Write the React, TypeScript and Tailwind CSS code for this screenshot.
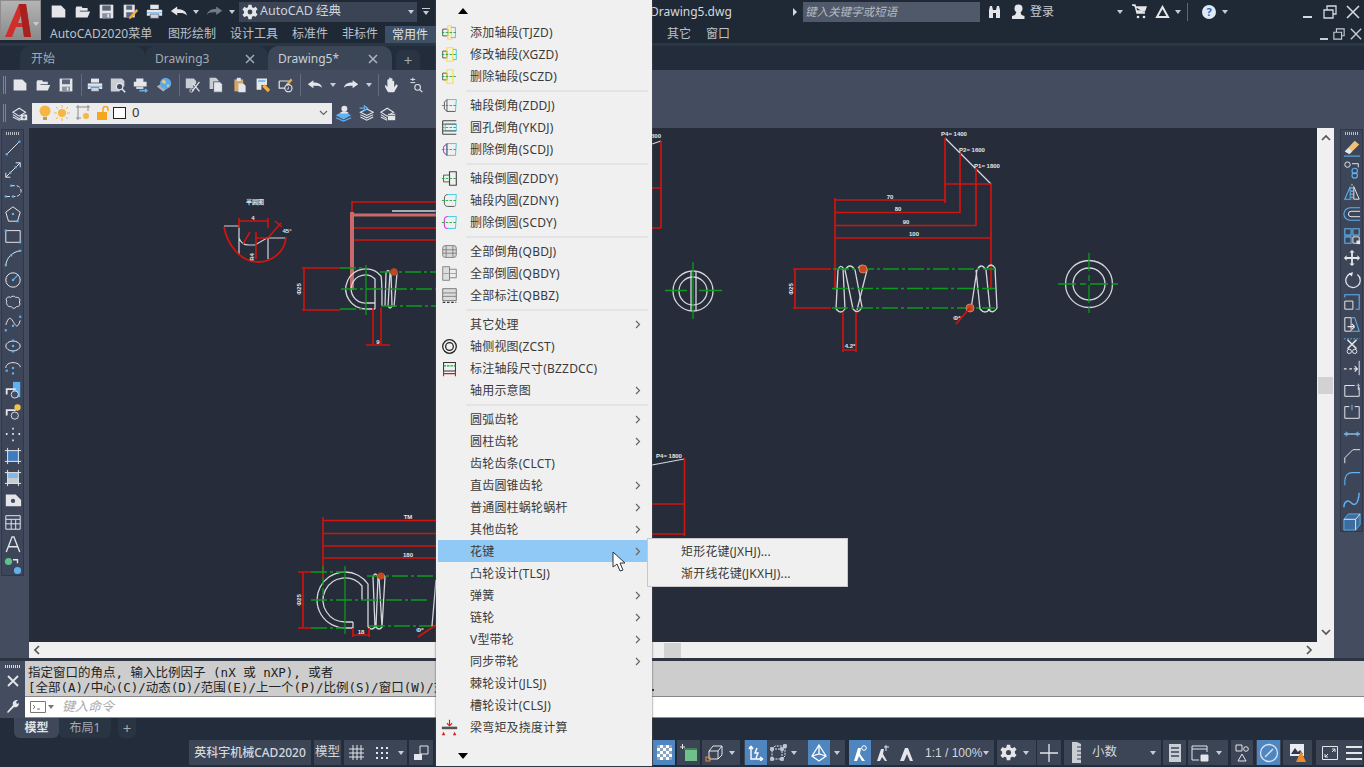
import { ReactNode } from "react";

const sans = "font-['Noto_Sans','Noto_Sans_CJK_SC',sans-serif]";
const RED = "#d0150f";
const GREEN = "#0c9a1c";
const WIRE = "#d4d6da";

type IconProps = { size?: number; className?: string; children: ReactNode };

// every toolbar glyph is drawn on a 20x20 box
function Ic({ size = 18, className = "", children }: IconProps) {
  return (
    <svg width={size} height={size} viewBox="0 0 20 20" fill="none" className={`shrink-0 ${className}`}>
      {children}
    </svg>
  );
}

const W = "#e4e6ea";
const B = "#5fb2ef";

const glyph: Record<string, ReactNode> = {
  file: <path d="M2 3h11l5 5v9H2z" fill={W} />,
  open: <path d="M2 6l1-2h6l1 2h6v3H7l-3 8H2zM6 10h13l-3 7H3z" fill={W} />,
  save: (
    <>
      <path d="M2 2h16v16H2z" fill={W} />
      <path d="M5 3h10v6H5z" fill="#5d6676" />
      <path d="M5 12h10v6H5z" fill="#8a92a0" />
      <path d="M11 13h2v4h-2z" fill={W} />
    </>
  ),
  saveas: (
    <>
      <path d="M2 2h13v15H2z" fill={W} />
      <path d="M5 3h7v5H5zM5 11h8v6H5z" fill="#5d6676" />
      <path d="M9 16l8-9 2 2-8 9-3 1z" fill="#efb040" />
    </>
  ),
  print: (
    <>
      <path d="M5 2h10v5H5z" fill={W} />
      <path d="M1 8h18v7H1z" fill={W} />
      <path d="M1 11h18v1H1z" fill="#5fb2ef" />
      <path d="M5 13h10v5H5z" fill="#cfd3da" stroke="#444d60" strokeWidth="0.7" />
    </>
  ),
  undo: <path d="M1 9l7-5v3c6 0 10 2 11 7-2-3-6-3-11-3v3z" fill={W} />,
  redo: <path d="M19 9l-7-5v3C6 7 2 9 1 14c2-3 6-3 11-3v3z" fill="#727a88" />,
  redo2: <path d="M19 9l-7-5v3C6 7 2 9 1 14c2-3 6-3 11-3v3z" fill={W} />,
  preview: (
    <>
      <path d="M1 2h14l3 3v7h-6v6H1z" fill="#c9cdd4" />
      <circle cx="12" cy="12" r="4" fill="#444d60" stroke={W} strokeWidth="1.5" />
      <path d="M15 15l4 4" stroke={W} strokeWidth="2" />
    </>
  ),
  plot: (
    <>
      <path d="M4 2h9v4H4zM1 6h16v6H1z" fill={W} />
      <path d="M4 12h9v3H4z" fill="#cfd3da" />
      <path d="M8 16h7v-2l4 3-4 3v-2H8z" fill={B} />
    </>
  ),
  globe: (
    <>
      <path d="M1 12l8-5 8 5-8 6z" fill="#aab0ba" />
      <circle cx="12" cy="8" r="7" fill="#5aa8e8" />
      <path d="M9 3c3 1 4 3 3 5-2 1-4 0-5-2zM14 9c2 0 3 1 3 2l-3 2z" fill="#e8c878" />
    </>
  ),
  cut: (
    <>
      <path d="M1 2h10l3 3v3l-4 3 1 3H1z" fill="#c9cdd4" />
      <path d="M10 8l8 10M18 6L9 18" stroke={W} strokeWidth="1.6" />
      <circle cx="8" cy="17" r="2" stroke={W} />
    </>
  ),
  copy: (
    <>
      <path d="M2 1h8l3 3v11H2z" fill="#c9cdd4" />
      <path d="M7 6h8l3 3v10H7z" fill={W} stroke="#444d60" />
    </>
  ),
  paste: (
    <>
      <path d="M3 3h11v15H3z" fill="#d3a865" />
      <path d="M6 1h5v4H6z" fill={W} />
      <path d="M8 8h6l3 3v8H8z" fill={W} />
    </>
  ),
  match: (
    <>
      <path d="M2 2h13v8H8v6H2z" fill={W} />
      <path d="M4 4h9v2H4z" fill="#5fb2ef" />
      <path d="M9 12l3-3 7 7-3 3z" fill="#efb040" />
    </>
  ),
  block: (
    <>
      <path d="M1.500 5h12M1.500 5v9h7" stroke={W} strokeWidth="1.5" />
      <path d="M10 9l6-7 2 2-6 7z" fill="#efb040" />
      <circle cx="13" cy="14" r="4.500" stroke={W} strokeWidth="1.4" />
      <path d="M13 12v3h-2" stroke={W} />
    </>
  ),
  hand: (
    <path
      d="M5 18c-2-3-4-6-4-8 1-1 2 0 3 2V4c0-2 2-2 2 0v4-6c0-2 2-2 2 0v6-5c0-2 2-2 2 0v6-3c0-2 2-2 2 0v6l2-3c2-1 2 1 2 2l-3 5-1 2z"
      fill={W}
    />
  ),
  zoomx: (
    <>
      <path d="M3 3h6M6 1v4M3 7h6" stroke={W} strokeWidth="1.2" />
      <circle cx="12" cy="13" r="3.500" stroke={W} strokeWidth="1.3" />
      <path d="M15 16l3 3" stroke={W} strokeWidth="1.5" />
    </>
  ),
  layerA: (
    <>
      <path d="M1 9l8-5 8 5-8 5zM1 12l8 5 8-5M1 15l8 4 8-4" stroke={W} strokeWidth="1.3" />
      <rect x="11" y="12" width="8" height="7" fill={W} />
      <path d="M15 13v5M13 15.500h4" stroke="#444d60" />
    </>
  ),
  layerB: (
    <>
      <path d="M1 12l9-5 9 5-9 5z" fill={B} />
      <path d="M1 15l9 4 9-4" stroke={B} strokeWidth="1.500" />
      <circle cx="11" cy="4.500" r="3.500" fill={W} />
      <path d="M6 10c0-3 10-3 10 0z" fill={W} />
    </>
  ),
  layerC: (
    <>
      <path d="M3 9l8-4 8 4-8 4zM3 12l8 4 8-4M3 15l8 4 8-4" stroke={W} strokeWidth="1.3" />
      <path d="M2 4h6V1l4 3-4 3V5" stroke={B} strokeWidth="1.500" />
    </>
  ),
  layerD: (
    <>
      <path d="M1 9l8-5 8 5-8 5zM1 12l8 5M1 15l8 4" stroke={W} strokeWidth="1.3" />
      <rect x="10" y="11" width="9" height="8" fill={W} />
      <path d="M10 13h9" stroke="#444d60" />
    </>
  ),
};

function Dots({ pts }: { pts: number[][] }) {
  return (
    <>
      {pts.map(([x, y]) => (
        <rect key={`${x}-${y}`} x={x - 1.2} y={y - 1.2} width="2.400" height="2.400" fill={B} />
      ))}
    </>
  );
}

const line = { stroke: W, strokeWidth: 1.1 };
const blueLine = { stroke: B, strokeWidth: 1.2 };

const leftTools: ReactNode[] = [
  <><path d="M3 17L17 3" {...line} /><Dots pts={[[3, 17], [17, 3]]} /></>,
  <><path d="M2 18L18 2M18 2h-5M18 2v5M2 18h5M2 18v-5" {...line} /><Dots pts={[[7, 13], [13, 7]]} /></>,
  <><path d="M8 3h5c4 0 6 3 6 6s-3 6-6 6H2" {...line} strokeDasharray="4 2" /><Dots pts={[[2, 15], [10, 15], [8, 3]]} /></>,
  <><path d="M10 2l8 6-3 10H5L2 8z" {...line} /><Dots pts={[[10, 10], [15, 18]]} /></>,
  <><path d="M2 4h16v13H2z" {...line} /><Dots pts={[[2, 4], [18, 17]]} /></>,
  <><path d="M2 18C3 9 10 3 18 2" {...line} /><Dots pts={[[2, 18], [8, 7], [18, 2]]} /></>,
  <><circle cx="10" cy="10" r="8" {...line} /><path d="M10 10l6-6" {...blueLine} /><Dots pts={[[10, 10]]} /></>,
  <path d="M3 9c-2-3 2-6 4-4 2-2 5-2 6 0 3-1 6 2 4 5 2 3-1 6-3 5-2 3-5 2-6 0-3 1-6-2-5-6z" {...line} />,
  <><path d="M2 11c3-9 5-9 8-4s5 9 8-1" {...line} /><Dots pts={[[2, 17], [18, 2], [10, 12]]} /></>,
  <><ellipse cx="10" cy="10" rx="8" ry="5.500" {...line} /><Dots pts={[[10, 4], [10, 16], [10, 10]]} /></>,
  <><path d="M2 10c0-4 4-6 8-6s8 2 8 5" {...line} /><Dots pts={[[10, 10], [10, 16], [3, 13]]} /></>,
  <><path d="M10 1h8v17h-8z" fill={B} /><path d="M2 8h11v2H4v5H2z" fill={W} /><circle cx="12" cy="15" r="4" fill="#444d60" stroke={W} /></>,
  <><path d="M2 7h11v2H4v5H2z" fill={W} /><circle cx="15" cy="5" r="3.500" fill="#f2c050" /><circle cx="12" cy="14" r="4" fill="#444d60" stroke={W} /></>,
  <path d="M10 3v2M3 9v2M17 9v2M10 9v2M10 16v2" stroke={W} strokeWidth="1.800" />,
  <><path d="M4 4h12v12H4z" fill="#3e7cc0" /><path d="M1 4h18M1 16h18M4 1v18M16 1v18" {...line} /></>,
  <><path d="M4 4h12v12H4z" fill="#80b8e8" /><path d="M4 10h12v6H4z" fill="#c8ccd2" /><path d="M1 4h18M1 16h18M4 1v18M16 1v18" {...line} /></>,
  <><path d="M2 4h11l6 6v7H2z" fill={W} /><circle cx="10" cy="11" r="2.400" fill="#444d60" /></>,
  <><path d="M2 3h16v15H2zM2 7h16M2 12h16M8 7v11M13 7v11" stroke={W} strokeWidth="1.100" /></>,
  <path d="M2.500 19L9 2h2l6.500 17M5 13h10" stroke={W} strokeWidth="1.500" />,
  <><circle cx="5" cy="5" r="4" fill="#5ec28a" /><circle cx="15" cy="15" r="4" fill={B} /><path d="M10 3h5v4" stroke={W} strokeWidth="1.500" /></>,
];

const rightTools: ReactNode[] = [
  <><path d="M2 14L13 2l5 4-10 10z" fill="#efc27a" /><path d="M2 14l4-4 4 4-3 3z" fill={W} /><path d="M1 19h18" {...blueLine} /></>,
  <><circle cx="5" cy="4" r="3" {...line} /><path d="M10 3h7v4" {...line} /><circle cx="13" cy="11" r="3" {...blueLine} /><circle cx="13" cy="16" r="3" {...blueLine} /></>,
  <><path d="M2 18L8 4v14z" {...blueLine} /><path d="M18 18L12 4v14z" {...line} /><path d="M10 1v18" stroke={W} strokeDasharray="2 1.500" /></>,
  <><path d="M19 3H8a6.500 6.500 0 000 14h11" {...blueLine} /><path d="M19 7H9a3 3 0 000 6h10" {...line} /></>,
  <><path d="M2 2h7v7H2zM11 2h7v7h-7zM2 11h7v7H2z" {...blueLine} /><path d="M11 11h7v7h-7z" {...line} /><rect x="15" y="15" width="4" height="4" fill={W} /></>,
  <path d="M10 1l3 3h-2v5h5V7l3 3-3 3v-2h-5v5h2l-3 3-3-3h2v-5H4v2l-3-3 3-3v2h5V4H7z" fill={W} />,
  <><path d="M8 3a8 8 0 108 1" stroke={W} strokeWidth="1.400" /><path d="M11 1L6 3l4 3z" fill={W} /></>,
  <><path d="M2 9h9v9H2z" {...line} /><path d="M2 5V2h16v16h-4" {...blueLine} /></>,
  <><path d="M2 3h7v15H2z" {...line} /><path d="M9 3h4l5 15H9" {...blueLine} /><path d="M5 13h8M13 13l-3-3M13 13l-3 3" stroke={W} strokeWidth="1.300" /></>,
  <><path d="M1 2h18" stroke={B} strokeDasharray="2 1.500" /><path d="M5 3l10 10M15 3L5 13" stroke={W} strokeWidth="1.800" /><circle cx="7" cy="16" r="2.400" {...line} /><circle cx="13" cy="16" r="2.400" {...line} /></>,
  <><path d="M18 2v16" {...line} /><path d="M1 11h3M7 11h3M12 11h4M13 8l3 3-3 3" stroke={W} strokeWidth="1.300" /></>,
  <><path d="M13 5H2v12h16V7M17 3v7" {...line} /><path d="M15 5h4" {...blueLine} /></>,
  <><path d="M7 4H2v13h16V4h-5" {...line} /><path d="M10 2v6" {...blueLine} /></>,
  <><path d="M1 10h18" {...line} /><path d="M3 7l4 3-4 3zM17 7l-4 3 4 3z" fill={B} /></>,
  <path d="M2 18v-6L11 3h8" {...line} />,
  <path d="M2 18v-5c0-6 4-9 8-9h9" {...blueLine} />,
  <path d="M1 18c0-6 4-9 8-5s8 2 9-11" {...blueLine} strokeWidth={1.6} />,
  <><path d="M6 1h13v12l-5 6H1V7z" fill="#3d6d9f" stroke={B} /><path d="M1 7h13v12M14 7l5-6" {...line} /></>,
];

function Caret({ className = "" }: { className?: string }) {
  return <span className={`block h-0 w-0 shrink-0 border-x-[3px] border-t-[4px] border-x-transparent border-t-[#c8ccd2] ${className}`} />;
}

function Grip({ vertical }: { vertical?: boolean }) {
  return vertical ? (
    <div className="h-[18px] w-[3px] border-x border-[#7d8594]" />
  ) : (
    <div className="h-[3px] w-[14px] bg-[repeating-linear-gradient(90deg,#b7bcc5_0,#b7bcc5_1px,transparent_1px,transparent_2px)]" />
  );
}

function Sep() {
  return <div className="h-[22px] w-px bg-[#636c7c]" />;
}

function TitleBar() {
  return (
    <div className={`flex h-[23px] items-center whitespace-nowrap text-[#d5d8dd] [&>*]:shrink-0 ${sans}`}>
      <div className="ml-[9px] flex w-[185px] items-center justify-between">
        <Ic size={17}>{glyph.file}</Ic>
        <Ic size={17}>{glyph.open}</Ic>
        <Ic size={17}>{glyph.save}</Ic>
        <Ic size={17}>{glyph.saveas}</Ic>
        <Ic size={17}>{glyph.print}</Ic>
        <div className="flex items-center gap-[5px]">
          <Ic size={18}>{glyph.undo}</Ic>
          <Caret />
        </div>
        <div className="flex items-center gap-[6px]">
          <Ic size={17}>{glyph.redo}</Ic>
          <Caret className="border-t-[#7d8594]" />
        </div>
      </div>
      <div className="ml-[4px] flex h-[20px] w-[178px] items-center bg-[#3a4454] pl-[3px] pr-[3px] text-[12.500px]">
        <svg width="16" height="16" viewBox="0 0 20 20" className="shrink-0">
          <path
            d="M8 1h4l.5 3 2 1 2.500-1.500 2.500 3-2 2v2.500l2 2-2.500 3L14.500 15l-2 1-.5 3H8l-.5-3-2-1L3 16.500.5 13.500l2-2V9l-2-2L3 3.500 5.500 5l2-1z"
            fill="#e4e6ea"
          />
          <circle cx="10" cy="10" r="3" fill="#3a4454" />
        </svg>
        <span className="ml-[2px] text-[#cfd3d9]">AutoCAD 经典</span>
        <Caret className="ml-auto" />
      </div>
      <div className="ml-[4px] flex w-[10px] flex-col items-center gap-[2px]">
        <div className="h-px w-[8px] bg-[#c8ccd2]" />
        <Caret />
      </div>
      <div className="ml-[219px] w-[82px] text-[12px] text-[#d5d8dd]">Drawing5.dwg</div>
      <div className="ml-[61px] h-0 w-0 border-y-[4px] border-l-[4px] border-y-transparent border-l-[#d5d8dd]" />
      <div className="ml-[6px] flex h-[20px] w-[177px] items-center bg-[#4f5969] pl-[2px] text-[11.500px] italic text-[#b4b9c1]">
        键入关键字或短语
      </div>
      <svg width="13" height="14" viewBox="0 0 13 14" className="ml-[8px]">
        <path d="M1 5l1-4h2l1 4v8H1zM8 5l1-4h2l1 4v8H8zM5 5h3v3H5z" fill="#e4e6ea" />
      </svg>
      <svg width="13" height="15" viewBox="0 0 13 15" className="ml-[11px]">
        <circle cx="6.500" cy="4.500" r="4" fill="#e4e6ea" />
        <path d="M4.500 8h4l1 3 3 1v3H0v-3l3-1z" fill="#e4e6ea" />
      </svg>
      <span className="ml-[5px] w-[24px] text-[12px] text-[#c8ccd2]">登录</span>
      <Caret className="ml-[63px]" />
      <svg width="15" height="15" viewBox="0 0 15 15" className="ml-[9px]">
        <path d="M0 1h3l2 8h8M3.500 3H14l-1.500 4H5" stroke="#e4e6ea" strokeWidth="1.400" fill="#e4e6ea" />
        <circle cx="6" cy="13" r="1.300" fill="#e4e6ea" />
        <circle cx="12" cy="13" r="1.300" fill="#e4e6ea" />
      </svg>
      <svg width="15" height="14" viewBox="0 0 15 14" className="ml-[8px]">
        <path d="M7.500 2L13 12H2z" stroke="#e4e6ea" strokeWidth="2" fill="none" />
      </svg>
      <Caret className="ml-[5px]" />
      <div className="ml-[6px] h-[18px] w-px bg-[#5d6676]" />
      <div className="ml-[14px] flex h-[14px] w-[14px] items-center justify-center rounded-full bg-[#dfe9f5] text-[11px] font-bold leading-none text-[#2a6db5]">
        ?
      </div>
      <Caret className="ml-[6px]" />
      <div className="ml-[75px] mt-[10px] h-[2px] w-[9px] bg-[#d5d8dd]" />
      <svg width="14" height="14" viewBox="0 0 14 14" className="ml-[11px]" stroke="#d5d8dd" strokeWidth="1.300" fill="none">
        <path d="M1 5h9v8H1zM4 5V1h9v8h-3" />
      </svg>
      <svg width="14" height="14" viewBox="0 0 14 14" className="ml-[9px]" stroke="#d5d8dd" strokeWidth="1.600">
        <path d="M1 1l12 12M13 1L1 13" />
      </svg>
    </div>
  );
}

function MenuBar() {
  return (
    <div className={`flex h-[20px] items-end text-[12px] text-[#bcc1c9] ${sans}`}>
      <span className="ml-[9px] w-[118px]">AutoCAD2020菜单</span>
      <span className="w-[62px]">图形绘制</span>
      <span className="w-[62px]">设计工具</span>
      <span className="w-[50px]">标准件</span>
      <span className="w-[43px]">非标件</span>
      <span className="flex h-[17px] w-[51px] items-center bg-[#3e5066] pl-[7px] text-[#dfe2e6]">常用件</span>
      <span className="ml-[231px] w-[39px]">其它</span>
      <span>窗口</span>
      <div className="ml-auto mr-[2px] flex items-center gap-[5px] pb-[3px]">
        <div className="mt-[9px] h-[2px] w-[8px] bg-[#c8ccd2]" />
        <svg width="12" height="12" viewBox="0 0 14 14" stroke="#c8ccd2" strokeWidth="1.300" fill="none">
          <path d="M1 5h9v8H1zM4 5V1h9v8h-3" />
        </svg>
        <svg width="12" height="12" viewBox="0 0 14 14" stroke="#c8ccd2" strokeWidth="1.600">
          <path d="M1 1l12 12M13 1L1 13" />
        </svg>
      </div>
    </div>
  );
}

function Header() {
  return (
    <div className="flex h-[46px] border-b-[3px] border-[#2b3645] bg-[#1f2936]">
      <div className="flex h-[40px] w-[41px] shrink-0 items-center border border-[#8d8d8d] bg-[linear-gradient(#b4b4b4,#8a8a8a)] pl-[4px]">
        <svg width="26" height="33" viewBox="0 0 26 33">
          <path d="M0 33L14 0h7l5 33h-7l-1-10h-7l-4 10zM13 19h5l-1-10z" fill="#cf2f2b" />
          <path d="M14 0h7l5 33h-7z" fill="#a92020" />
        </svg>
        <Caret className="ml-[2px] mt-[8px] border-t-[#3a3a3a]" />
      </div>
      <div className="min-w-0 flex-1">
        <TitleBar />
        <MenuBar />
      </div>
    </div>
  );
}

function Tabs() {
  const tab = "flex h-[24px] items-center rounded-t-[10px] pt-px text-[12px]";
  return (
    <div className={`flex h-[24px] items-end bg-[#222c3a] text-[#a4aab3] ${sans}`}>
      <div className={`${tab} ml-[20px] w-[125px] bg-[#2a3544] pl-[11px]`}>开始</div>
      <div className={`${tab} w-[123px] bg-[#2a3544] pl-[10px]`}>
        Drawing3
        <svg width="10" height="10" viewBox="0 0 10 10" className="ml-auto mr-[13px]" stroke="#a4aab3" strokeWidth="1.500">
          <path d="M1 1l8 8M9 1L1 9" />
        </svg>
      </div>
      <div className={`${tab} w-[124px] bg-[#3b4657] pl-[10px] text-[#ccd0d6]`}>
        Drawing5*
        <svg width="10" height="10" viewBox="0 0 10 10" className="ml-auto mr-[14px]" stroke="#b0b5bd" strokeWidth="1.500">
          <path d="M1 1l8 8M9 1L1 9" />
        </svg>
      </div>
      <div className="ml-[4px] flex h-[20px] w-[24px] items-center justify-center rounded-t-[6px] bg-[#2a3544] text-[15px]">+</div>
    </div>
  );
}

function Toolbars() {
  return (
    <div className="flex h-[58px] flex-col bg-[#444d60]">
      <div className="flex h-[28px] items-center pl-[3px] pt-[2px]">
        <Grip vertical />
        <div className="ml-[6px] flex w-[62px] items-center justify-between">
          <Ic size={16}>{glyph.file}</Ic>
          <Ic size={16}>{glyph.open}</Ic>
          <Ic size={16}>{glyph.save}</Ic>
        </div>
        <div className="ml-[7px]"><Sep /></div>
        <div className="ml-[5px] flex w-[85px] items-center justify-between">
          <Ic size={16}>{glyph.print}</Ic>
          <Ic size={16}>{glyph.preview}</Ic>
          <Ic size={16}>{glyph.plot}</Ic>
          <Ic size={16}>{glyph.globe}</Ic>
        </div>
        <div className="ml-[7px]"><Sep /></div>
        <div className="ml-[5px] flex w-[109px] items-center justify-between">
          <Ic size={16}>{glyph.cut}</Ic>
          <Ic size={16}>{glyph.copy}</Ic>
          <Ic size={16}>{glyph.paste}</Ic>
          <Ic size={16}>{glyph.match}</Ic>
          <Ic size={16}>{glyph.block}</Ic>
        </div>
        <div className="ml-[6px]"><Sep /></div>
        <Ic size={16} className="ml-[6px]">{glyph.undo}</Ic>
        <Caret className="ml-[7px]" />
        <Ic size={16} className="ml-[7px]">{glyph.redo2}</Ic>
        <Caret className="ml-[7px]" />
        <div className="ml-[6px]"><Sep /></div>
        <Ic size={17} className="ml-[5px]">{glyph.hand}</Ic>
        <Ic size={16} className="ml-[7px]">{glyph.zoomx}</Ic>
      </div>
      <div className="mt-[3px] flex h-[24px] items-center pl-[3px]">
        <Grip vertical />
        <Ic size={16} className="ml-[6px]">{glyph.layerA}</Ic>
        <div className={`ml-[4px] flex h-[21px] w-[300px] items-center bg-[#ececec] pl-[5px] text-[13px] text-[#333] ${sans}`}>
          <svg width="14" height="16" viewBox="0 0 14 16" className="ml-[1px]">
            <circle cx="7" cy="6" r="5.500" fill="#f5b642" />
            <path d="M5 12h4v3H5z" fill="#c89a50" />
          </svg>
          <svg width="16" height="16" viewBox="0 0 16 16" className="ml-[2px]">
            <circle cx="8" cy="8" r="4" fill="#f5b642" />
            <path d="M8 0v3M8 13v3M0 8h3M13 8h3M2 2l2 2M12 12l2 2M14 2l-2 2M4 12l-2 2" stroke="#f5b642" />
          </svg>
          <svg width="16" height="16" viewBox="0 0 16 16" className="ml-[5px]">
            <path d="M1 2h14M1 13h5M3 0v15M13 0v6" stroke="#888" />
            <circle cx="11" cy="11" r="3" fill="#f5b642" />
          </svg>
          <svg width="14" height="16" viewBox="0 0 14 16" className="ml-[5px]">
            <path d="M1 7h10v8H1z" fill="#f5a81f" />
            <path d="M7 7V4a2.500 2.500 0 015 0v2" stroke="#f5a81f" strokeWidth="1.500" fill="none" />
          </svg>
          <div className="ml-[3px] h-[12px] w-[13px] border border-[#222] bg-white" />
          <span className="ml-[6px]">0</span>
          <svg width="9" height="6" viewBox="0 0 9 6" className="ml-auto mr-[4px]" stroke="#666" fill="none" strokeWidth="1.200">
            <path d="M1 1l3.500 3.500L8 1" />
          </svg>
        </div>
        <Ic size={17} className="ml-[3px]">{glyph.layerB}</Ic>
        <Ic size={16} className="ml-[6px]">{glyph.layerC}</Ic>
        <Ic size={16} className="ml-[6px]">{glyph.layerD}</Ic>
      </div>
    </div>
  );
}

function SideTools({ tools }: { tools: ReactNode[] }) {
  return (
    <div className="flex w-[23px] flex-col items-center border border-[#2f3848] bg-[#3d4658] pt-[2px]">
      <Grip />
      <div className="mt-[4px] flex flex-col items-center gap-[4px]">
        {tools.map((t, i) => (
          <Ic key={i} size={18}>{t}</Ic>
        ))}
      </div>
    </div>
  );
}

function Wire({ d }: { d: string }) {
  return <path d={d} stroke={WIRE} strokeWidth="1.300" fill="none" />;
}

function Cl({ x1, y1, x2, y2 }: { x1: number; y1: number; x2: number; y2: number }) {
  return <line x1={x1} y1={y1} x2={x2} y2={y2} stroke={GREEN} strokeWidth="1.400" strokeDasharray="16 3 3 3" />;
}

function Dim({ d, w = 1.600 }: { d: string; w?: number }) {
  return <path d={d} stroke={RED} strokeWidth={w} fill="none" />;
}

function Lbl({ x, y, t, r }: { x: number; y: number; t: string; r?: number }) {
  return (
    <text
      x={x}
      y={y}
      fontSize="6"
      fontWeight="700"
      fill="#e6e6e6"
      textAnchor="middle"
      fontFamily="'Liberation Sans','Noto Sans CJK SC',sans-serif"
      transform={r ? `rotate(${r} ${x} ${y})` : undefined}
    >
      {t}
    </text>
  );
}

function Drawing() {
  return (
    <svg viewBox="29 128 1288 514" className="block h-full w-full" fill="none">
      {/* half round key section */}
      <Lbl x={255} y={204} t="半圆图" />
      <path d="M224 226h15v29M239 238c2 6 6 7 10 7h6l12-7h18M268 238v21" stroke={WIRE} strokeWidth="1.200" />
      <Dim d="M224 227c4 20 18 35 34 35 14 0 27-10 28-25" w={1.800} />
      <Dim d="M239 221h29M239 218v10M268 218v10M256 232v27M243 244l7-12M255 238h13M268 238l13-15M275 221l7 6" />
      <Lbl x={253} y={220} t="4" />
      <Lbl x={287} y={233} t="45°" />
      <Lbl x={254} y={257} t="R4" r={-90} />

      {/* spring, upper left */}
      <Dim d="M352 202h84M352 228h84M352 240h84M352 215h84" />
      <path d="M352 212v78" stroke="#c96a6a" strokeWidth="4" />
      <path d="M352 215h84" stroke="#c96a6a" strokeWidth="3" />
      <path d="M392 211h44" stroke={WIRE} strokeWidth="1.500" />
      <Dim d="M352 201v11" />
      <Dim d="M304 268v42M302 268h38M302 310h38" />
      <Lbl x={301} y={289} t="Φ25" r={-90} />
      <Wire d="M375 309H366A20 20 0 1 1 381 276Q382 280 382 306" />
      <Wire d="M375 303H366A14 14 0 1 1 375 279V303M375 303V309" />
      <Wire d="M385 306L386 273Q388 268 390 273L388 306Q390 310 392 306L391 273Q393 268 397 273L394 307" />
      <Cl x1={340} y1={268} x2={366} y2={268} />
      <Cl x1={380} y1={272} x2={436} y2={272} />
      <Cl x1={341} y1={289} x2={436} y2={289} />
      <Cl x1={340} y1={309} x2={366} y2={309} />
      <Cl x1={381} y1={306} x2={436} y2={306} />
      <path d="M366 265v50" stroke={GREEN} strokeWidth="1.300" />
      <circle cx="394" cy="272" r="3.500" fill="#c8481d" stroke="#8c4a3a" />
      <Dim d="M373 308v37M381 308v37M366 345h24" />
      <Lbl x={378} y={344} t="9" />

      {/* fragment right of the menu */}
      <path d="M652 144l9-3M652 465l32-6" stroke={WIRE} strokeWidth="1.200" />
      <Dim d="M661 141v87M652 188h9M652 228h9M684.500 458v78M652 504h32M652 534h32" w={1.700} />
      <Lbl x={656} y={138} t="800" />
      <Lbl x={669} y={458} t="P4= 1800" />

      {/* end view */}
      <circle cx="693" cy="291" r="20" stroke={WIRE} strokeWidth="1.300" />
      <circle cx="693" cy="291" r="14" stroke={WIRE} strokeWidth="1.300" />
      <path d="M691 272v38M696 271v39" stroke={WIRE} strokeWidth="1.300" />
      <path d="M665 290.500h22M699 290.500h23M693 262v57" stroke={GREEN} strokeWidth="1.300" />

      {/* spring, main view */}
      <path d="M945 138l46 46" stroke={WIRE} strokeWidth="1.200" />
      <Dim d="M945 138v65M960 153v60M976 168v58M991 184v106M945 184h46M835 198v92" w={1.700} />
      <Dim d="M835 200h110M835 212.500h125M835 225.500h141M835 238h156" w={1.600} />
      <Lbl x={954} y={136} t="P4= 1400" />
      <Lbl x={972} y={152} t="P2= 1600" />
      <Lbl x={987} y={168} t="P1= 1800" />
      <Lbl x={890} y={199} t="70" />
      <Lbl x={898} y={211} t="80" />
      <Lbl x={906} y={224} t="90" />
      <Lbl x={914} y={236} t="100" />
      <Dim d="M795 269v39M793 269h38M793 308h38" w={1.700} />
      <Lbl x={793} y={289} t="Φ25" r={-90} />
      <Wire d="M836 309L838 270Q840 264 843 268L845 309Q841 315 836 309" />
      <Wire d="M845 270Q850 262 855 270L862 307Q858 315 853 309L845 270" />
      <Wire d="M858 268Q862 262 867 270L857 310" />
      <Wire d="M971 309L977 270Q981 262 986 270L990 309Q985 315 980 309L976 270" />
      <Wire d="M987 268Q991 262 995 268L997 308Q993 315 988 309" />
      <Cl x1={833} y1={269} x2={995} y2={269} />
      <Cl x1={832} y1={288.500} x2={995} y2={288.500} />
      <Cl x1={832} y1={308} x2={995} y2={308} />
      <circle cx="863" cy="269" r="4" fill="#c8481d" stroke="#d0806a" />
      <circle cx="970" cy="308" r="4" fill="#c8481d" stroke="#d0806a" />
      <Dim d="M970 308l-14 16M843 312v40M856 312v40M843 350h13" w={1.700} />
      <Lbl x={957} y={320} t="Φ*" />
      <Lbl x={850} y={348} t="4.2*" />

      {/* end view, right */}
      <circle cx="1089" cy="284" r="23.500" stroke={WIRE} strokeWidth="1.300" />
      <circle cx="1089" cy="284" r="16" stroke={WIRE} strokeWidth="1.300" />
      <path d="M1058 284h61M1089 253v64" stroke={GREEN} strokeWidth="1.300" strokeDasharray="18 4 6 4" />

      {/* spring, lower left */}
      <Dim d="M323 517v60M323 520.500h113M323 533.500h113M323 546h113M323 558h113" />
      <Lbl x={408} y={519} t="TM" />
      <Lbl x={408} y={557} t="180" />
      <Dim d="M303 572v56M298 572h13M298 628h13" w={1.700} />
      <Lbl x={301} y={600} t="Φ25" r={-90} />
      <Wire d="M353 628H345A28 28 0 1 1 368 584V627" />
      <Wire d="M353 622H345A22 22 0 1 1 362 586V600M353 622V628" />
      <Wire d="M368 627Q372 631 375 627L373 577Q375 571 378 577L376 627Q379 631 382 627L379 577Q382 571 385 577L382 627" />
      <Cl x1={311} y1={572} x2={345} y2={572} />
      <Cl x1={367} y1={576} x2={436} y2={576} />
      <Cl x1={311} y1={600} x2={428} y2={600} />
      <Cl x1={311} y1={628} x2={345} y2={628} />
      <Cl x1={369} y1={626} x2={436} y2={626} />
      <path d="M345 566v68" stroke={GREEN} strokeWidth="1.300" />
      <path d="M323 566v34" stroke={GREEN} strokeWidth="1.300" strokeDasharray="8 3" />
      <circle cx="381" cy="576" r="3.500" fill="#c8481d" />
      <Dim d="M353 628v9M369 628v9M353 635h16M418 637l18-12" w={1.700} />
      <Lbl x={361} y={634} t="18" />
      <Lbl x={420} y={632} t="Φ*" />
      <path d="M432 626l4-46" stroke={WIRE} strokeWidth="1.300" />
    </svg>
  );
}

function Chev({ d, className = "" }: { d: string; className?: string }) {
  return (
    <svg width="8" height="10" viewBox="0 0 8 10" className={className} stroke="#555" strokeWidth="1.700" fill="none">
      <path d={d} />
    </svg>
  );
}

function Main() {
  return (
    <div className="flex h-[530px] bg-[#444d60]">
      <div className="w-[29px] shrink-0 pl-px pt-px">
        <SideTools tools={leftTools} />
      </div>
      <div className="flex min-w-0 flex-1 flex-col">
        <div className="flex min-h-0 flex-1">
          <div className="min-w-0 flex-1 bg-[#262c39]">
            <Drawing />
          </div>
          <div className="flex w-[17px] flex-col items-center bg-[#f0f0f0]">
            <svg width="10" height="8" viewBox="0 0 10 8" className="mt-[6px]" stroke="#555" strokeWidth="1.700" fill="none">
              <path d="M1 6l4-4 4 4" />
            </svg>
            <div className="mt-[235px] h-[17px] w-[15px] bg-[#d2d2d2]" />
            <svg width="10" height="8" viewBox="0 0 10 8" className="mb-[6px] mt-auto" stroke="#555" strokeWidth="1.700" fill="none">
              <path d="M1 2l4 4 4-4" />
            </svg>
          </div>
        </div>
        <div className="flex h-[16px] items-center bg-[#f0f0f0] pr-[17px]">
          <Chev d="M6 1L2 5l4 4" className="ml-[4px]" />
          <div className="ml-[623px] h-[15px] w-[17px] bg-[#d2d2d2]" />
          <Chev d="M2 1l4 4-4 4" className="ml-auto mr-[4px]" />
        </div>
      </div>
      <div className="w-[30px] shrink-0 pl-[6px] pt-px">
        <SideTools tools={rightTools} />
      </div>
    </div>
  );
}

function CommandLine() {
  return (
    <div className="flex h-[60px] border-t-[3px] border-t-[#2d3543] bg-[#444d60]">
      <div className="flex w-[25px] shrink-0 flex-col items-center">
        <div className="mt-[4px] h-[3px] w-[16px] bg-[repeating-linear-gradient(90deg,#d8dbe0_0,#d8dbe0_1px,transparent_1px,transparent_2px)]" />
        <svg width="12" height="12" viewBox="0 0 12 12" className="mt-[7px]" stroke="#e4e6ea" strokeWidth="1.800">
          <path d="M1 1l10 10M11 1L1 11" />
        </svg>
        <svg width="14" height="14" viewBox="0 0 14 14" className="mt-[12px]">
          <path d="M1 13l6-7c-1-3 1-5 5-5l-2 2 1 2 2-1c0 3-2 5-5 4l-6 6z" fill="#e4e6ea" />
        </svg>
      </div>
      <div className="flex min-w-0 flex-1 flex-col">
        <div className="relative h-[36px] whitespace-nowrap border-b border-[#888] bg-[#cdcdcd] pl-[3px] pt-[4px] font-['DejaVu_Sans_Mono','Noto_Sans_CJK_SC',monospace] text-[12.500px] leading-[15px] text-[#222]">
          <div>指定窗口的角点, 输入比例因子 (nX 或 nXP), 或者</div>
          <div>[全部(A)/中心(C)/动态(D)/范围(E)/上一个(P)/比例(S)/窗口(W)/对</div>
          <span className="absolute left-[627px] top-[28px] h-[2px] w-[2px] bg-[#333]" />
        </div>
        <div className={`flex h-[21px] items-center border-b border-[#8a8f98] bg-white pl-[5px] text-[13px] italic text-[#aaa] ${sans}`}>
          <svg width="16" height="12" viewBox="0 0 16 12" fill="none" stroke="#777">
            <path d="M.5.5h15v11H.5z" />
            <path d="M3 4l2 2-2 2M7 8h3" />
          </svg>
          <span className="ml-[2px] h-0 w-0 border-x-[3px] border-t-[4px] border-x-transparent border-t-[#777]" />
          <span className="ml-[8px]">键入命令</span>
        </div>
      </div>
    </div>
  );
}

function LayoutTabs() {
  return (
    <div className={`flex h-[22px] items-start bg-[#222c3a] text-[12px] text-[#a4aab3] ${sans}`}>
      <span className="ml-[14px] flex h-[20px] w-[45px] items-center justify-center rounded-b-[6px] bg-[#3f4859] font-bold text-[#dfe2e6]">模型</span>
      <span className="flex h-[20px] w-[52px] items-center justify-center rounded-b-[6px] bg-[#2a3544]">布局1</span>
      <span className="ml-[7px] flex h-[20px] w-[18px] items-center justify-center rounded-b-[6px] bg-[#2a3544] text-[15px]">+</span>
    </div>
  );
}

function Seg({ className = "", children }: { className?: string; children: ReactNode }) {
  return <div className={`flex h-[25px] shrink-0 items-center bg-[#3b4555] ${className}`}>{children}</div>;
}

function On({ children, className = "" }: { children: ReactNode; className?: string }) {
  return <div className={`flex h-[25px] w-[22px] shrink-0 items-center justify-center bg-[#4f86c0] ${className}`}>{children}</div>;
}

function StatusBar() {
  return (
    <div className={`flex h-[27px] items-start whitespace-nowrap bg-[#222c3a] text-[13px] text-[#d5d8dd] ${sans}`}>
      <Seg className="ml-[189px] w-[122px] justify-center text-[12px] font-medium">英科宇机械CAD2020</Seg>
      <Seg className="ml-[3px] w-[27px] justify-center text-[12.500px]">模型</Seg>
      <Seg className="ml-[3px] w-[63px] pl-[5px]">
        <svg width="15" height="15" viewBox="0 0 15 15" stroke={W}>
          <path d="M0 4h15M0 8h15M0 12h15M4 0v15M8 0v15M12 0v15" />
        </svg>
        <svg width="14" height="14" viewBox="0 0 14 14" className="ml-[11px]">
          <path d="M1 2h2M6 2h2M11 2h2M1 7h2M6 7h2M11 7h2M1 12h2M6 12h2M11 12h2" stroke={W} strokeWidth="2" />
        </svg>
        <Caret className="ml-[9px]" />
      </Seg>
      <Seg className="ml-[2px] w-[24px] justify-center">
        <svg width="16" height="16" viewBox="0 0 16 16">
          <path d="M7 1h8v8H7z" fill="none" stroke={W} />
          <path d="M1 9h8v6H1z" fill={W} />
        </svg>
      </Seg>

      {/* hidden behind the menu until x=652 */}
      <Seg className="ml-[219px] w-[23px]">
        <On className="ml-px w-[21px]">
          <svg width="15" height="15" viewBox="0 0 15 15">
            <rect width="15" height="15" fill="#fff" />
            <path d="M0 0h3v3H0zM6 0h3v3H6zM12 0h3v3h-3zM3 3h3v3H3zM9 3h3v3H9zM0 6h3v3H0zM6 6h3v3H6zM12 6h3v3h-3zM3 9h3v3H3zM9 9h3v3H9zM0 12h3v3H0zM6 12h3v3H6zM12 12h3v3h-3z" fill="#8aa4c2" />
          </svg>
        </On>
      </Seg>
      <Seg className="ml-[2px] w-[23px] justify-center">
        <svg width="18" height="18" viewBox="0 0 18 18">
          <path d="M0 3h5M2.500 0v5" stroke={W} />
          <path d="M4 4h13v2H4z" fill="#4b7a58" />
          <path d="M5 6h12v11H5z" fill="#6fc08a" />
        </svg>
      </Seg>
      <Seg className="ml-[2px] w-[38px] pl-[3px]">
        <svg width="18" height="18" viewBox="0 0 18 18" fill="none" stroke={W}>
          <path d="M4 7l4-5h9v9l-4 4H4zM4 7h9v8M13 7l4-5" />
          <rect x="1" y="13" width="4" height="4" stroke="#e88c3c" />
        </svg>
        <Caret className="ml-[6px]" />
      </Seg>

      <Seg className="ml-[4px] w-[101px]">
        <On className="ml-px">
          <svg width="16" height="16" viewBox="0 0 16 16" fill="none" stroke="#fff" strokeWidth="1.400">
            <path d="M3 1v13h12M3 1L1 4M3 1l2 3M15 14l-3-2M15 14l-3 2M9 3L7 8h3l-2 5" />
          </svg>
        </On>
        <svg width="18" height="18" viewBox="0 0 18 18" className="ml-[2px]" fill="none" stroke={W}>
          <path d="M3 5l3-3h10v10l-3 3H3zM3 5h10v10" strokeDasharray="2 1" />
          <Dots pts={[[3, 5], [13, 5], [3, 15], [13, 15], [16, 2]]} />
        </svg>
        <Caret className="ml-[4px]" />
        <On className="ml-[11px]">
          <svg width="18" height="18" viewBox="0 0 18 18" fill="none" stroke="#fff" strokeWidth="1.300">
            <path d="M9 1l7 11-7 5-7-5zM9 1v9M2 12l7-2 7 2" />
          </svg>
        </On>
        <Caret className="ml-[4px]" />
      </Seg>

      <Seg className="ml-[4px] w-[145px]">
        <On>
          <svg width="14" height="18" viewBox="0 0 14 18">
            <path d="M1 17L5 4h3l-1 6 5 7h-3L6 12l-2 5z" fill="#fff" />
            <circle cx="11" cy="4" r="2.300" fill="none" stroke="#fff" />
          </svg>
        </On>
        <svg width="15" height="18" viewBox="0 0 15 18" className="ml-[5px]">
          <path d="M1 17L5 5h3l-1 5 4 7H9l-3-4-2 4z" fill={W} />
          <path d="M10 1v6M8 3h5" stroke={W} />
        </svg>
        <svg width="15" height="18" viewBox="0 0 15 18" className="ml-[8px]">
          <path d="M1 17L6 4h3l5 13h-3L8 10l-3 7z" fill={W} />
        </svg>
        <span className="ml-[11px] font-['Liberation_Sans',sans-serif] text-[12px] text-[#d5d8dd]">1:1 / 100%</span>
        <Caret className="ml-auto mr-[5px]" />
      </Seg>

      <Seg className="ml-[3px] w-[39px] pl-[3px]">
        <svg width="17" height="17" viewBox="0 0 20 20">
          <path d="M8 1h4l.5 3 2 1 2.500-1.500 2.500 3-2 2v2.500l2 2-2.500 3L14.500 15l-2 1-.5 3H8l-.5-3-2-1L3 16.500.5 13.500l2-2V9l-2-2L3 3.500 5.500 5l2-1z" fill={W} />
          <circle cx="10" cy="10" r="3" fill="#3b4555" />
        </svg>
        <Caret className="ml-[6px]" />
      </Seg>
      <Seg className="ml-px w-[24px] justify-center">
        <svg width="18" height="18" viewBox="0 0 18 18" stroke={W} strokeWidth="1.300">
          <path d="M0 9h18M9 0v18" />
        </svg>
      </Seg>

      <Seg className="ml-[3px] w-[97px] pl-[8px]">
        <svg width="9" height="21" viewBox="0 0 9 21">
          <path d="M0 0h5l4 2v19H0z" fill="#c9cdd4" />
          <path d="M9 5H5M9 9H5M9 13H5M9 17H5" stroke="#3b4555" />
        </svg>
        <span className="ml-[11px] text-[12.500px]">小数</span>
        <Caret className="ml-auto mr-[5px]" />
      </Seg>
      <Seg className="ml-[2px] w-[23px] justify-center">
        <svg width="12" height="18" viewBox="0 0 12 18">
          <path d="M0 0h12v18H0z" fill="#c9cdd4" />
          <path d="M2 4h8M2 8h8M2 12h8" stroke="#3b4555" strokeWidth="1.300" />
        </svg>
      </Seg>
      <Seg className="ml-[2px] w-[40px] pl-[3px]">
        <svg width="18" height="18" viewBox="0 0 18 18" fill="none" stroke={W}>
          <path d="M8 16H1V2h15v6M1 5h15" />
          <path d="M10 11h7v6h-7z" fill={W} />
        </svg>
        <Caret className="ml-[7px]" />
      </Seg>
      <Seg className="ml-[3px] w-[22px] justify-center">
        <svg width="14" height="18" viewBox="0 0 14 18" fill="none" stroke={W}>
          <path d="M1 1h6v6H1z" />
          <circle cx="11" cy="5" r="2.300" />
          <path d="M7 10l4 7H3z" />
        </svg>
      </Seg>
      <Seg className="ml-[3px] w-[25px] justify-center">
        <On className="w-[23px]">
          <svg width="20" height="20" viewBox="0 0 20 20" fill="none" stroke="#d8e4f2" strokeWidth="1.300">
            <circle cx="10" cy="10" r="8.500" />
            <path d="M6 14l8-8" />
          </svg>
        </On>
      </Seg>
      <Seg className="ml-[2px] w-[29px] justify-center">
        <svg width="18" height="20" viewBox="0 0 18 20">
          <path d="M1 1h14v12H1z" fill="#e8ebef" />
          <path d="M2 11l4-6 3 4 2-2 3 4z" fill="#2e3a4c" />
          <path d="M12 8l5 11H7z" fill="#ec8a2c" />
        </svg>
      </Seg>
      <Seg className="ml-[4px] w-[28px] justify-center">
        <svg width="16" height="14" viewBox="0 0 16 14" fill="none" stroke={W}>
          <path d="M.5.5h15v13H.5z" />
          <path d="M3 11l3-3M3 8v3h3M13 3l-3 3M13 6V3h-3" />
        </svg>
      </Seg>
      <Seg className="w-[19px] justify-center">
        <svg width="16" height="16" viewBox="0 0 16 16" stroke={W} strokeWidth="1.800">
          <path d="M0 2h16M0 8h16M0 14h16" />
        </svg>
      </Seg>
    </div>
  );
}

type Entry =
  | { sep: true }
  | { label: string; sub?: boolean; icon?: ReactNode };

const mg = "#18a838";
const yl = "#f4e23c";
const cy = "#28c8d8";
const mg2 = "#d83cd8";
const bk = "#444";

function Axis() {
  return <path d="M1 10h18" stroke={mg} strokeDasharray="3 1.500" />;
}

const entries: Entry[] = [
  { label: "添加轴段(TJZD)", icon: <><path d="M2 6h6v8H2z" stroke={bk} /><path d="M8 2h4v16H8z" stroke={yl} strokeWidth="1.300" /><path d="M12 4h5v12h-5" stroke={cy} /><Axis /></> },
  { label: "修改轴段(XGZD)", icon: <><path d="M2 6h5v8H2z" stroke={bk} /><path d="M7 2h7v16H7z" stroke={yl} strokeWidth="1.300" /><path d="M14 4h4v12h-4" stroke={cy} /><Axis /></> },
  { label: "删除轴段(SCZD)", icon: <><path d="M2 6h5v8H2z" stroke={bk} /><path d="M7 2h7v16H7z" stroke={yl} strokeWidth="1.300" /><Axis /></> },
  { sep: true },
  { label: "轴段倒角(ZDDJ)", icon: <><path d="M7 3L4 6v8l3 3h10" stroke={bk} /><path d="M7 3h11l-1 14" stroke={cy} /><path d="M7 3v14" stroke={bk} /><Axis /></> },
  { label: "圆孔倒角(YKDJ)", icon: <><path d="M2 2h16M2 18h16M2 2v16" stroke={bk} strokeWidth="1.300" /><path d="M5 6h13v8H5z" stroke={cy} /><path d="M2 6h16M2 14h16" stroke={bk} /><Axis /></> },
  { label: "删除倒角(SCDJ)", icon: <><path d="M7 3L3 7v6l4 4" stroke={mg2} strokeWidth="1.300" /><path d="M7 3h11l-1 14H7z" stroke={cy} /><path d="M7 3v14" stroke={bk} /><Axis /></> },
  { sep: true },
  { label: "轴段倒圆(ZDDY)", icon: <><path d="M3 6h7v8H3z" stroke={bk} /><path d="M10 2h8v16h-8z" stroke={bk} strokeWidth="1.300" /><Axis /></> },
  { label: "轴段内圆(ZDNY)", icon: <><path d="M8 3C5 3 4 5 4 7v6c0 2 1 4 4 4h8" stroke={bk} /><path d="M8 3h10l-1 14" stroke={cy} /><Axis /></> },
  { label: "删除倒圆(SCDY)", icon: <><path d="M8 3C5 3 4 5 4 7v6c0 2 1 4 4 4" stroke={mg2} strokeWidth="1.300" /><path d="M8 3h10l-1 14H8" stroke={cy} /><Axis /></> },
  { sep: true },
  { label: "全部倒角(QBDJ)", icon: <><rect x="2" y="3" width="16" height="14" rx="3" fill="#d8d8d8" stroke="#777" /><path d="M2 8h16M2 12h16M6 3v14M14 3v14" stroke="#777" /></> },
  { label: "全部倒圆(QBDY)", icon: <><path d="M2 2h8v16H2z" fill="#ddd" stroke="#777" /><path d="M10 5h8v10h-8z" fill="#eee" stroke="#777" /><path d="M2 10h16" stroke="#999" /></> },
  { label: "全部标注(QBBZ)", icon: <><path d="M2 2h16v14H2z" fill="#ddd" stroke="#666" /><path d="M2 7h16M2 11h16" stroke="#777" /><path d="M2 18h16" stroke="#333" strokeWidth="1.500" strokeDasharray="3 2" /></> },
  { sep: true },
  { label: "其它处理", sub: true },
  { label: "轴侧视图(ZCST)", icon: <><circle cx="10" cy="10" r="8" stroke="#222" strokeWidth="1.500" /><circle cx="10" cy="10" r="4.500" stroke="#222" strokeWidth="1.500" /></> },
  { label: "标注轴段尺寸(BZZDCC)", icon: <><path d="M3 3h14v10H3z" stroke="#333" strokeWidth="1.200" /><path d="M3 7h14" stroke={mg} strokeWidth="1.500" strokeDasharray="3 1" /><path d="M3 13v6M17 13v6M3 16h14" stroke="#d81818" strokeWidth="1.300" /></> },
  { label: "轴用示意图", sub: true },
  { sep: true },
  { label: "圆弧齿轮", sub: true },
  { label: "圆柱齿轮", sub: true },
  { label: "齿轮齿条(CLCT)" },
  { label: "直齿圆锥齿轮", sub: true },
  { label: "普通圆柱蜗轮蜗杆", sub: true },
  { label: "其他齿轮", sub: true },
  { label: "花键", sub: true },
  { label: "凸轮设计(TLSJ)" },
  { label: "弹簧", sub: true },
  { label: "链轮", sub: true },
  { label: "V型带轮", sub: true },
  { label: "同步带轮", sub: true },
  { label: "棘轮设计(JLSJ)" },
  { label: "槽轮设计(CLSJ)" },
  { label: "梁弯矩及挠度计算", icon: <><path d="M10 1v7M7 5l3 3 3-3" stroke="#d81818" strokeWidth="1.300" /><path d="M1 9h18v3H1z" fill="#555" /><path d="M3 15l-2 4h4zM16 15l-2 4h4z" fill="#d81818" /></> },
];

function ContextMenu() {
  return (
    <div className={`absolute left-[436px] top-0 flex h-[766px] w-[216px] flex-col bg-[#f0f0f0] text-[12px] tracking-[0.2px] text-[#3a3a3a] shadow-[0_0_2px_#555] ${sans}`}>
      <div className="flex h-[21px] shrink-0 items-center pl-[22px]">
        <span className="h-0 w-0 border-x-[5px] border-b-[6px] border-x-transparent border-b-black" />
      </div>
      {entries.map((e, i) =>
        "sep" in e ? (
          <div key={i} className="flex h-[7px] shrink-0 items-center pl-[30px] pr-[4px]">
            <div className="h-[2px] w-full bg-[#e4e4e4]" />
          </div>
        ) : (
          <div key={i} className={`flex h-[22px] shrink-0 items-center ${e.label === "花键" ? "ml-[2px] bg-[#90c8f6] pl-[32px]" : "pl-[34px]"}`}>
            {e.icon && (
              <svg width="17" height="17" viewBox="0 0 20 20" fill="none" className="absolute left-[5px] shrink-0">
                {e.icon}
              </svg>
            )}
            <span className="mt-px">{e.label}</span>
            {e.sub && (
              <svg width="6" height="9" viewBox="0 0 6 9" className="ml-auto mr-[11px]" stroke="#666" strokeWidth="1.200" fill="none">
                <path d="M1 1l3.500 3.500L1 8" />
              </svg>
            )}
          </div>
        )
      )}
      <div className="mt-[7px] flex h-[21px] shrink-0 items-center pl-[22px]">
        <span className="h-0 w-0 border-x-[5px] border-t-[6px] border-x-transparent border-t-black" />
      </div>
    </div>
  );
}

function SubMenu() {
  return (
    <div className={`absolute left-[647px] top-[538px] flex h-[49px] w-[201px] flex-col justify-center border border-[#c8c8c8] bg-[#f0f0f0] pl-[33px] text-[12px] tracking-[0.2px] text-[#3a3a3a] ${sans}`}>
      <div className="flex h-[22px] items-center">矩形花键(JXHJ)...</div>
      <div className="flex h-[22px] items-center">渐开线花键(JKXHJ)...</div>
    </div>
  );
}

function Cursor() {
  return (
    <svg width="15" height="21" viewBox="0 0 15 21" className="absolute left-[612px] top-[551px]">
      <path d="M1 1v15l4-3 3 7 3-1-3-7h5z" fill="#fff" stroke="#333" />
    </svg>
  );
}

export default function App() {
  return (
    <div className="relative flex h-[767px] w-[1364px] flex-col overflow-hidden bg-[#222c3a]">
      <Header />
      <Tabs />
      <Toolbars />
      <Main />
      <CommandLine />
      <LayoutTabs />
      <StatusBar />
      <ContextMenu />
      <SubMenu />
      <Cursor />
    </div>
  );
}
